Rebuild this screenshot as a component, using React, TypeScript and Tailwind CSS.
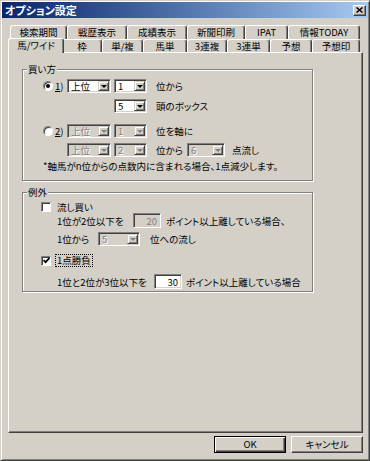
import React from "react";

const font = "font-['Noto_Sans_CJK_JP','Noto_Sans',sans-serif] [font-feature-settings:'palt']";

function Triangle({ disabled }: { disabled?: boolean }) {
  return (
    <span
      className={`h-0 w-0 border-x-[3px] border-t-[3px] border-x-transparent ${
        disabled ? "border-t-[#808080]" : "border-t-black"
      }`}
    />
  );
}

function Combo({ value, className, disabled }: { value: string; className: string; disabled?: boolean }) {
  return (
    <div
      className={`flex h-[14px] border border-t-[#808080] border-l-[#808080] border-b-white border-r-white p-px shadow-[inset_1px_1px_0_#404040,inset_-1px_-1px_0_#d4d0c8] ${
        disabled ? "bg-[#d4d0c8] text-[#808080] [text-shadow:1px_1px_0_#fff]" : "bg-white text-black"
      } ${className}`}
    >
      <span className="flex-1 pl-[2px] leading-[10px]">{value}</span>
      <span className="flex w-[11px] items-center justify-center border border-t-[#d4d0c8] border-l-[#d4d0c8] border-r-[#404040] border-b-[#404040] bg-[#d4d0c8] shadow-[inset_1px_1px_0_#fff,inset_-1px_-1px_0_#808080]">
        <Triangle disabled={disabled} />
      </span>
    </div>
  );
}

function Edit({ value, disabled }: { value: string; disabled?: boolean }) {
  return (
    <div
      className={`flex h-[15px] w-[28px] items-center justify-end border border-t-[#808080] border-l-[#808080] border-b-white border-r-white pr-[3px] leading-[10px] shadow-[inset_1px_1px_0_#404040,inset_-1px_-1px_0_#d4d0c8] ${
        disabled ? "bg-[#d4d0c8] text-[#808080]" : "bg-white text-black"
      }`}
    >
      {value}
    </div>
  );
}

function Radio({ checked }: { checked?: boolean }) {
  return (
    <span className="flex h-[10px] w-[10px] items-center justify-center rounded-full border border-t-[#808080] border-l-[#808080] border-b-white border-r-white bg-white shadow-[inset_1px_1px_0_#404040]">
      {checked && <span className="h-[4px] w-[4px] rounded-full bg-black" />}
    </span>
  );
}

function Check({ checked }: { checked?: boolean }) {
  return (
    <span className="flex h-[10px] w-[10px] items-center justify-center border border-t-[#808080] border-l-[#808080] border-b-white border-r-white bg-white shadow-[inset_1px_1px_0_#404040]">
      {checked && (
        <svg width="7" height="7" viewBox="0 0 7 7">
          <path d="M0.6 3.2 L2.6 5.2 L6.4 1.2" fill="none" stroke="#000" strokeWidth="1.7" />
        </svg>
      )}
    </span>
  );
}

const tabBase =
  "flex h-full justify-center rounded-t-[3px] border-l border-t border-r border-l-white border-t-white border-r-[#404040] shadow-[inset_-1px_0_0_#808080] leading-[10px]";

const row1 = [
  { t: "検索期間", w: "w-[57px]" },
  { t: "戦歴表示", w: "w-[60px]" },
  { t: "成績表示", w: "w-[60px]" },
  { t: "新聞印刷", w: "w-[58px]" },
  { t: "IPAT", w: "w-[43px]" },
  { t: "情報TODAY", w: "w-[72px]" },
];

const row2 = [
  { t: "枠", w: "w-[40px]" },
  { t: "単/複", w: "w-[41px]" },
  { t: "馬単", w: "w-[44px]" },
  { t: "3連複", w: "w-[40px]" },
  { t: "3連単", w: "w-[43px]" },
  { t: "予想", w: "w-[42px]" },
  { t: "予想印", w: "w-[48px]" },
];

export default function App() {
  return (
    <div
      className={`flex h-[461px] w-[370px] flex-col overflow-hidden border border-t-[#d4d0c8] border-l-[#d4d0c8] border-b-[#404040] border-r-[#404040] bg-[#d4d0c8] p-px text-[9.5px] text-black shadow-[inset_1px_1px_0_#fff,inset_-1px_-1px_0_#808080] ${font}`}
    >
      {/* title bar */}
      <div className="flex h-[16px] items-center bg-linear-to-r from-[#0a246a] to-[#a6caf0] pl-[3px] pr-[2px]">
        <span className="text-[11px] font-bold leading-none text-white">オプション設定</span>
        <span className="ml-auto flex h-[11px] w-[13px] items-center justify-center border border-t-white border-l-white border-r-[#404040] border-b-[#404040] bg-[#d4d0c8] shadow-[inset_-1px_-1px_0_#808080]">
          <svg width="7" height="6" viewBox="0 0 7 6">
            <path d="M0.5 0.5 L6.5 5.5 M6.5 0.5 L0.5 5.5" stroke="#000" strokeWidth="1.5" />
          </svg>
        </span>
      </div>

      {/* tabs */}
      <div className="ml-[8px] mt-[7px] flex h-[14px]">
        {row1.map((tab) => (
          <div key={tab.t} className={`${tabBase} items-start pt-px ${tab.w}`}>
            {tab.t}
          </div>
        ))}
      </div>
      <div className="ml-[6px] flex h-[13px] items-end">
        <div className="relative z-10 -mb-px -mr-[2px] flex h-[15px] w-[56px] shrink-0 items-start justify-center rounded-t-[3px] border-l border-t border-r border-l-white border-t-white border-r-[#404040] bg-[#d4d0c8] pt-px leading-[11px] shadow-[inset_-1px_0_0_#808080]">
          馬/ワイド
        </div>
        {row2.map((tab) => (
          <div key={tab.t} className={`${tabBase} shrink-0 items-center ${tab.w}`}>
            {tab.t}
          </div>
        ))}
      </div>

      {/* tab panel */}
      <div className="ml-[6px] h-[381px] w-[355px] border border-t-white border-l-white border-r-[#404040] border-b-[#404040] pl-[13px] pt-[16px] shadow-[inset_-1px_-1px_0_#808080]">
        {/* 買い方 */}
        <div className="relative h-[112px] w-[291px] border border-[#808080] pl-[20px] pt-[9px] leading-[12px] shadow-[1px_1px_0_#fff,inset_1px_1px_0_#fff]">
          <span className="absolute -top-[7px] left-[4px] bg-[#d4d0c8] px-px">買い方</span>

          <div className="flex h-[14px] items-center">
            <Radio checked />
            <span className="ml-[2px] w-[12px]">
              <span className="underline">1</span>)
            </span>
            <Combo value="上位" className="w-[44px]" />
            <Combo value="1" className="ml-[3px] w-[33px]" />
            <span className="ml-[9px]">位から</span>
          </div>

          <div className="ml-[71px] mt-[6px] flex h-[14px] items-center">
            <Combo value="5" className="w-[33px]" />
            <span className="ml-[9px]">頭のボックス</span>
          </div>

          <div className="mt-[11px] flex h-[14px] items-center">
            <Radio />
            <span className="ml-[2px] w-[12px]">
              <span className="underline">2</span>)
            </span>
            <Combo value="上位" className="w-[44px]" disabled />
            <Combo value="1" className="ml-[3px] w-[33px]" disabled />
            <span className="ml-[9px]">位を軸に</span>
          </div>

          <div className="ml-[24px] mt-[5px] flex h-[14px] items-center">
            <Combo value="上位" className="w-[44px]" disabled />
            <Combo value="2" className="ml-[3px] w-[33px]" disabled />
            <span className="ml-[9px] w-[31px]">位から</span>
            <Combo value="6" className="w-[38px]" disabled />
            <span className="ml-[7px]">点流し</span>
          </div>

          <div className="mt-[3px]">*軸馬がn位からの点数内に含まれる場合、1点減少します。</div>
        </div>

        {/* 例外 */}
        <div className="relative mt-[11px] h-[100px] w-[291px] border border-[#808080] pl-[18px] pt-[7px] leading-[12px] shadow-[1px_1px_0_#fff,inset_1px_1px_0_#fff]">
          <span className="absolute -top-[7px] left-[4px] bg-[#d4d0c8] px-px">例外</span>

          <div className="flex h-[13px] items-center">
            <Check />
            <span className="ml-[6px]">流し買い</span>
          </div>

          <div className="ml-[16px] flex h-[15px] items-center">
            <span className="w-[76px]">1位が2位以下を</span>
            <Edit value="20" disabled />
            <span className="ml-[5px]">ポイント以上離している場合、</span>
          </div>

          <div className="ml-[16px] mt-[4px] flex h-[14px] items-center">
            <span className="w-[41px]">1位から</span>
            <Combo value="5" className="w-[42px]" disabled />
            <span className="ml-[10px]">位への流し</span>
          </div>

          <div className="mt-[8px] flex h-[13px] items-center">
            <Check checked />
            <span className="ml-[4px] border border-dotted border-black px-px leading-[11px]">1点勝負</span>
          </div>

          <div className="ml-[16px] mt-[7px] flex h-[15px] items-center">
            <span className="w-[97px]">1位と2位が3位以下を</span>
            <Edit value="30" />
            <span className="ml-[4px]">ポイント以上離している場合</span>
          </div>
        </div>
      </div>

      {/* buttons */}
      <div className="ml-[6px] mt-[3px] flex w-[355px] justify-end gap-[5px]">
        <button className="flex h-[17px] w-[72px] items-center justify-center border border-black leading-none shadow-[inset_1px_1px_0_#fff,inset_-1px_-1px_0_#404040,inset_-2px_-2px_0_#808080]">
          OK
        </button>
        <button className="flex h-[17px] w-[72px] items-center justify-center border border-t-white border-l-white border-r-[#404040] border-b-[#404040] leading-none shadow-[inset_-1px_-1px_0_#808080]">
          キャンセル
        </button>
      </div>
    </div>
  );
}
